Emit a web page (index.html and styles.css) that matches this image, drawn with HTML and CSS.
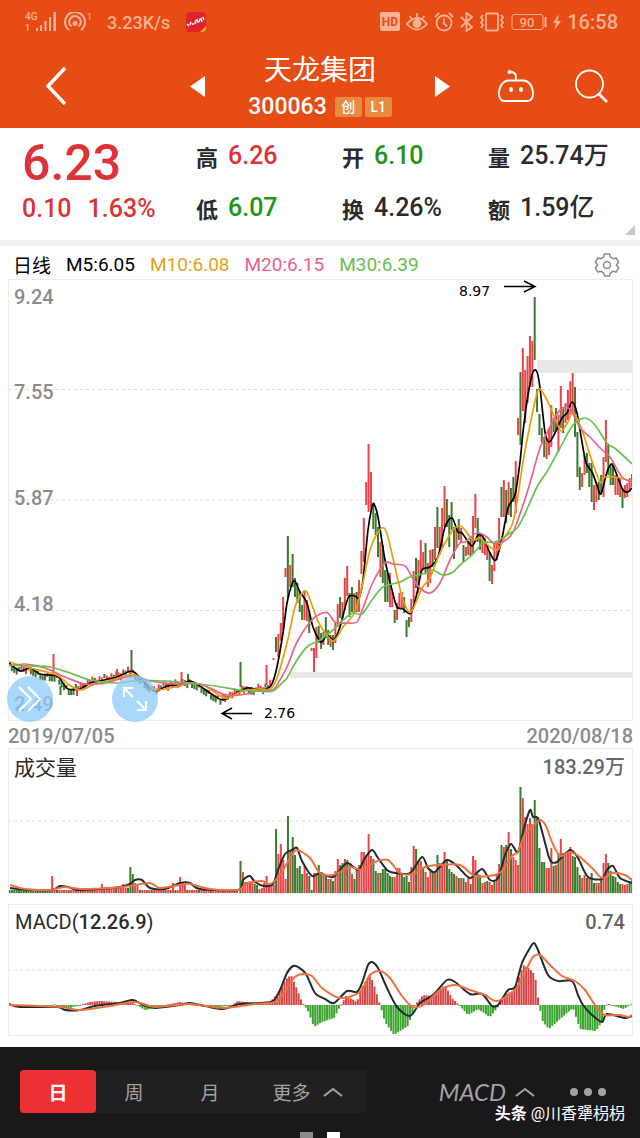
FILE: index.html
```html
<!DOCTYPE html>
<html lang="zh-CN">
<head>
	<meta charset="utf-8">
	<meta name="viewport" content="width=device-width, initial-scale=1">
	<title>天龙集团 300063</title>
	<link rel="stylesheet" href="styles.css">
</head>
<body>
<header class="header">
	<div class="status">
		<svg class="signal" width="32" height="20" viewBox="0 0 32 20" fill="currentColor">
			<text x="0" y="8" font-size="10" font-weight="500">4G</text>
			<text x="0" y="19" font-size="9" font-weight="500">1</text>
			<path d="M11 16h2v3h-2zM15 13h2v6h-2zM19.500 9h2v10h-2zM24 5h2v14h-2zM28.500 0h2.500v19h-2.500z"/>
		</svg>
		<svg class="hotspot" width="28" height="20" viewBox="0 0 28 20" fill="none" stroke="currentColor" stroke-width="2">
			<path d="M5 18a10 10 0 1 1 12 0M7.500 14.500a5.800 5.800 0 1 1 7 0"/>
			<circle cx="11" cy="11.500" r="2.500" fill="currentColor" stroke="none"/>
			<text x="23" y="8" font-size="9" fill="currentColor" stroke="none">1</text>
		</svg>
		<span class="speed">3.23K/s</span>
		<svg class="app" width="20" height="20" viewBox="0 0 20 20">
			<rect width="20" height="20" rx="4" fill="#e2222d"/>
			<path d="M20 14v2a4 4 0 0 1-4 4h-2z" fill="#f4b02c"/>
			<path d="M1 12l2 2M4 13l1-3M6 12l2 0M9 12l1-4M11 7l1 4M13 10l1-3M15 6l1 4M17 5l1 3" fill="none" stroke="#fff" stroke-width="1.500"/>
		</svg>
		<div class="status-right">
			<svg width="20" height="20" viewBox="0 0 20 20">
				<rect width="20" height="19" rx="2" fill="currentColor"/>
				<text x="10" y="14" font-size="12" font-weight="700" text-anchor="middle" fill="#e64c14">HD</text>
			</svg>
			<svg width="22" height="20" viewBox="0 0 22 20" fill="none" stroke="currentColor" stroke-width="1.800">
				<path d="M1 12q10-12 20 0q-10 11-20 0zM11 1v4M3.500 4l2.500 3M18.500 4l-2.500 3"/>
				<circle cx="11" cy="11.500" r="3.500" fill="currentColor"/>
			</svg>
			<svg width="20" height="20" viewBox="0 0 20 20" fill="none" stroke="currentColor" stroke-width="1.800">
				<circle cx="10" cy="11" r="7.500"/>
				<path d="M10 6.500v5l3 3M1 5l4-4M19 5l-4-4"/>
			</svg>
			<svg width="13" height="20" viewBox="0 0 13 20" fill="none" stroke="currentColor" stroke-width="1.800">
				<path d="M1 5l11 10-5.500 4V1L12 5 1 15"/>
			</svg>
			<svg width="26" height="20" viewBox="0 0 26 20" fill="none" stroke="currentColor" stroke-width="1.800">
				<rect x="7" y="1.500" width="12" height="17" rx="1"/>
				<path d="M4 3L2 5.500l2 2.500-2 2.500L4 13l-2 3M22 3l2 2.500L22 8l2 2.500-2 2.500 2 3" />
			</svg>
			<svg width="36" height="20" viewBox="0 0 36 20" fill="none" stroke="currentColor">
				<rect x="1" y="2.500" width="31" height="15" rx="2"/>
				<path d="M34.500 5v10" stroke-width="2"/>
				<text x="16" y="14.500" font-size="13" font-weight="500" text-anchor="middle" fill="currentColor" stroke="none">90</text>
			</svg>
			<svg class="bolt" width="8" height="20" viewBox="0 0 8 20" fill="currentColor">
				<path d="M6 2L0 11h3l-1.500 7L8 9H4.500z"/>
			</svg>
			<time class="clock">16:58</time>
		</div>
	</div>
	<nav class="nav">
		<div class="nav-left">
			<button type="button" aria-label="返回">
				<svg width="22" height="38" viewBox="0 0 22 38" fill="none" stroke="#fff" stroke-width="3.500"><path d="M20 1L3 19l17 18"/></svg>
			</button>
			<button type="button" aria-label="上一只">
				<svg width="15" height="21" viewBox="0 0 15 21" fill="#fff"><path d="M15 0v21L0 10.500z"/></svg>
			</button>
		</div>
		<div class="stock">
			<h1>天龙集团</h1>
			<p><span class="code">300063</span><span class="tag">创</span><span class="tag">L1</span></p>
		</div>
		<div class="nav-right">
			<button type="button" aria-label="下一只">
				<svg width="15" height="21" viewBox="0 0 15 21" fill="#fff"><path d="M0 0v21l15-10.500z"/></svg>
			</button>
			<button type="button" class="robot" aria-label="助手">
				<svg width="36" height="34" viewBox="0 0 36 34" fill="none" stroke="#fff" stroke-width="1.800">
					<path d="M11 11.500h14c6 0 10 6 10 13 0 5-2 7.500-6 7.500H7c-4 0-6-2.500-6-7.500 0-7 4-13 10-13zM18 11V8q0-5-6-5"/>
					<circle cx="11.500" cy="3" r="2" fill="#fff" stroke="none"/>
					<ellipse cx="13" cy="20.500" rx="2" ry="2.500" fill="#fff" stroke="none"/>
					<ellipse cx="23" cy="20.500" rx="2" ry="2.500" fill="#fff" stroke="none"/>
				</svg>
			</button>
			<button type="button" aria-label="搜索">
				<svg width="33" height="34" viewBox="0 0 33 34" fill="none" stroke="#fff" stroke-width="1.800">
					<circle cx="14.500" cy="15" r="13.500"/><path d="M24 25l8 8" stroke-width="2.500"/>
				</svg>
			</button>
		</div>
	</nav>
</header>

<section class="quote">
	<div class="price">
		<strong>6.23</strong>
		<span>0.10</span><span>1.63%</span>
	</div>
	<dl>
		<div><dt>高</dt><dd class="up">6.26</dd></div>
		<div><dt>开</dt><dd class="down">6.10</dd></div>
		<div><dt>量</dt><dd>25.74万</dd></div>
		<div><dt>低</dt><dd class="down">6.07</dd></div>
		<div><dt>换</dt><dd>4.26%</dd></div>
		<div><dt>额</dt><dd>1.59亿</dd></div>
	</dl>
	<i class="corner"></i>
</section>

<main>
	<div class="legend">
		<span class="name">日线</span>
		<span>M5:6.05</span>
		<span class="m10">M10:6.08</span>
		<span class="m20">M20:6.15</span>
		<span class="m30">M30:6.39</span>
		<button type="button" class="gear" aria-label="设置">
			<svg width="26" height="26" viewBox="0 0 26 26" fill="none" stroke="#8b8b8b" stroke-width="1.500" stroke-linejoin="round">
				<path d="M10.500 2h5l1 3.200 2.500 1.500 3.200-.8 2.300 4.300-2.200 2.800 2.200 2.800-2.300 4.300-3.200-.8-2.500 1.500-1 3.200h-5l-1-3.200-2.500-1.500-3.200.8-2.300-4.300L3.700 13 1.500 10.200l2.300-4.300 3.200.8 2.500-1.500z"/>
				<circle cx="13" cy="13" r="3.500"/>
			</svg>
		</button>
	</div>
	<div class="chart">
		<svg id="kline" viewBox="8 279 625 442">
			<path class="grid" d="M8 389.500H633M8 500H633M8 610.500H633"/>
			<path class="gap" d="M537 360h96v13h-96zM290 672h343v6H290z"/>
			<g class="axis">
				<text x="14" y="304">9.24</text>
				<text x="14" y="399">7.55</text>
				<text x="14" y="505">5.87</text>
				<text x="14" y="611">4.18</text>
				<text x="14" y="711">2.49</text>
			</g>
			<g class="mark">
				<text x="459" y="296">8.97</text>
				<path d="M504 286.500h30M524 281l11 5.500-11 5.500"/>
				<text x="264" y="718">2.76</text>
				<path d="M252 713.500h-30M232 708l-10 5.500 10 5.500"/>
			</g>
		</svg>
		<button type="button" class="round forward" aria-label="快进">
			<svg width="26" height="28" viewBox="0 0 26 28" fill="none" stroke="#fff" stroke-width="2"><path d="M2 2l12 12L2 26M11 2l12 12-12 12"/></svg>
		</button>
		<button type="button" class="round expand" aria-label="放大">
			<svg width="26" height="26" viewBox="0 0 26 26" fill="none" stroke="#fff" stroke-width="2"><path d="M2 11V2h9M2 2l9 9M24 15v9h-9M24 24l-9-9"/></svg>
		</button>
	</div>
	<div class="dates"><time>2019/07/05</time><time>2020/08/18</time></div>
	<div class="chart">
		<svg id="volume" viewBox="8 748 625 146">
			<path class="grid" d="M8 821H633"/>
			<text class="title" x="14" y="775">成交量</text>
			<text class="value" x="625" y="774">183.29万</text>
		</svg>
	</div>
	<div class="chart macd">
		<svg id="macd" viewBox="8 904 625 132">
			<path class="grid" d="M8 970H633"/>
			<text class="title small" x="15" y="929">MACD(<tspan class="bold">12.26.9</tspan>)</text>
			<text class="value" x="625" y="929">0.74</text>
		</svg>
	</div>
</main>

<footer class="footer">
	<div class="tabs">
		<button type="button" class="on">日</button>
		<button type="button">周</button>
		<button type="button">月</button>
		<button type="button" class="more">更多
			<svg width="20" height="10" viewBox="0 0 20 10" fill="none" stroke="currentColor" stroke-width="2"><path d="M1 9l9-7 9 7"/></svg>
		</button>
	</div>
	<button type="button" class="index">MACD
		<svg width="20" height="10" viewBox="0 0 20 10" fill="none" stroke="currentColor" stroke-width="2"><path d="M1 9l9-7 9 7"/></svg>
	</button>
	<button type="button" class="dots" aria-label="更多功能">
		<svg width="36" height="8" viewBox="0 0 36 8" fill="currentColor"><circle cx="4" cy="4" r="4"/><circle cx="18" cy="4" r="4"/><circle cx="32" cy="4" r="4"/></svg>
	</button>
	<div class="pager"><i></i><i class="on"></i></div>
	<p class="watermark"><b>头条</b> @川香犟枴枴</p>
</footer>
<script src="chart.js"></script>
</body>
</html>
```
FILE: styles.css
```css
* {
	margin: 0;
	padding: 0;
	box-sizing: border-box;
}
body {
	background: #fff;
	color: #2b2b2b;
	font-family: Roboto, "Noto Sans CJK SC", sans-serif;
}
button {
	border: 0;
	background: none;
	color: inherit;
	font: inherit;
	cursor: pointer;
}
svg {
	display: block;
}

/* 顶部 */
.header {
	height: 128px;
	background: #e64c14;
	color: #fff;
}
.status {
	display: flex;
	align-items: center;
	height: 44px;
	padding: 0 22px 0 25px;
	color: #fbb195;
}
.hotspot {
	margin-left: 7px;
}
.speed {
	margin-left: 15px;
	font-size: 18px;
	font-weight: 500;
}
.app {
	margin-left: 16px;
}
.status-right {
	display: flex;
	align-items: center;
	gap: 6px;
	margin-left: auto;
}
.clock {
	font-size: 20px;
	font-weight: 500;
}
.nav {
	display: grid;
	grid-template-columns: 1fr 230px 1fr;
	height: 84px;
}
.nav-left,
.nav-right {
	display: flex;
	align-items: center;
}
.nav-left {
	justify-content: space-between;
	padding-left: 45px;
}
.nav-right {
	gap: 41px;
	padding-right: 32px;
}
.robot {
	margin-left: auto;
}
.stock {
	padding-top: 8px;
	text-align: center;
}
.stock h1 {
	font-size: 28px;
	font-weight: 400;
	line-height: 38px;
}
.stock p {
	display: flex;
	align-items: center;
	justify-content: center;
	line-height: 34px;
}
.code {
	margin-right: 8px;
	font-size: 23px;
	font-weight: 500;
}
.tag {
	width: 27px;
	height: 20px;
	border-radius: 2px;
	background: #e88a40;
	font-size: 14px;
	font-weight: 500;
	line-height: 20px;
}
.tag + .tag {
	margin-left: 3px;
}

/* 行情 */
.quote {
	position: relative;
	display: grid;
	grid-template-columns: 174px 1fr;
	height: 118px;
	padding: 0 6px 6px 22px;
	border-bottom: 6px solid #f2f2f2;
}
.price {
	padding-top: 8px;
	color: #db3338;
	font-size: 25px;
	font-weight: 500;
}
.price strong {
	display: block;
	font-size: 50px;
	font-weight: 500;
	line-height: 54px;
}
.price span {
	margin-right: 16px;
	line-height: 38px;
}
.quote dl {
	display: grid;
	grid-template-columns: 1fr 1fr 1fr;
	grid-auto-rows: 52px;
	padding-top: 2px;
}
.quote dl div {
	display: flex;
	align-items: center;
}
.quote dt {
	width: 32px;
	font-size: 22px;
	font-weight: 700;
}
.quote dd {
	font-size: 25px;
	font-weight: 500;
	line-height: 38px;
	white-space: nowrap;
}
.quote .up {
	color: #db3338;
}
.quote .down {
	color: #239412;
}
.corner {
	position: absolute;
	right: 5px;
	bottom: 5px;
	border: 5px solid #c8c8c8;
	border-top-color: transparent;
	border-left-color: transparent;
}

/* 图表 */
main {
	padding: 0 7px 11px 8px;
}
.legend {
	display: flex;
	align-items: center;
	gap: 15px;
	height: 33px;
	padding: 4px 13px 0 5px;
	color: #000;
	font-size: 19px;
}
.m10 {
	color: #dfa21c;
}
.m20 {
	color: #e3638a;
}
.m30 {
	color: #68bd50;
}
.gear {
	margin-left: auto;
}
.chart {
	position: relative;
	outline: 1px solid #ececec;
	outline-offset: -1px;
}
.chart > svg {
	width: 100%;
	height: auto;
}
.grid {
	fill: none;
	stroke: #dcdcdc;
	stroke-dasharray: 3 3;
}
.gap {
	fill: #e8e8e8;
}
.axis {
	fill: #8c8c8c;
	font-size: 20px;
	font-weight: 500;
}
.mark {
	font-family: "DejaVu Sans", sans-serif;
	font-size: 14px;
	fill: #000;
}
.mark path {
	fill: none;
	stroke: #000;
	stroke-width: 1.5px;
}
.title {
	fill: #2b2b2b;
	font-size: 21px;
}
.title.small {
	font-size: 20px;
}
.bold {
	font-weight: 500;
}
.value {
	fill: #666;
	font-size: 20px;
	font-weight: 500;
	text-anchor: end;
}
.line {
	fill: none;
	stroke-width: 2px;
	stroke-linejoin: round;
}
#kline .line {
	stroke-width: 1.7px;
}
.macd {
	margin-top: 10px;
}
.dates {
	display: flex;
	justify-content: space-between;
	height: 27px;
	color: #8c8c8c;
	font-size: 20px;
	font-weight: 500;
	line-height: 31px;
}
.round {
	position: absolute;
	bottom: -1px;
	display: flex;
	align-items: center;
	justify-content: center;
	width: 46px;
	height: 46px;
	border-radius: 50%;
	background: rgba(140, 201, 252, .75);
}
.forward {
	left: -1px;
}
.expand {
	left: 104px;
}

/* 底部 */
.footer {
	position: relative;
	display: flex;
	align-items: flex-start;
	height: 91px;
	padding: 23px 34px 0 20px;
	background: #1a181b;
	color: #a3a3a3;
}
.tabs {
	display: flex;
	border-radius: 4px;
	background: #211f22;
}
.tabs button {
	width: 76px;
	height: 43px;
	border-radius: 4px;
	font-size: 19px;
}
.tabs .on {
	background: #ed3034;
	color: #fff;
	font-weight: 700;
}
.footer .more,
.index {
	display: flex;
	align-items: center;
	justify-content: center;
	gap: 12px;
}
.tabs .more {
	width: 119px;
}
.index {
	gap: 9px;
	height: 43px;
	margin-left: auto;
	font-family: Lato, sans-serif;
	font-size: 24px;
	font-style: italic;
}
.dots {
	height: 43px;
	margin-left: 35px;
}
.pager {
	position: absolute;
	bottom: 0;
	left: 0;
	right: 0;
	display: flex;
	justify-content: center;
	gap: 14px;
}
.pager i {
	width: 13px;
	height: 6px;
	background: #8a8a8a;
}
.pager .on {
	background: #fff;
}
.watermark {
	position: absolute;
	right: 15px;
	bottom: 12px;
	color: #fff;
	font-size: 16px;
	line-height: 24px;
	white-space: nowrap;
}
```
FILE: chart.js
```js
var NS = 'http://www.w3.org/2000/svg';
var RED = '#ea4448';
var GREEN = '#3c7a2c';
var STEP = 2.37;

function add(id, name, attrs) {
	var el = document.createElementNS(NS, name);
	for (var key in attrs) {
		el.setAttribute(key, attrs[key]);
	}
	document.getElementById(id).appendChild(el);
}

function bar(id, x, y1, y2, color) {
	add(id, 'rect', {x: x - 1, y: y1, width: 2, height: Math.max(y2 - y1, 1), fill: color});
}

function parse(text) {
	return text.trim().split(/\s+/).map(function (p) {
		return p.split(',').map(Number);
	});
}

//两点之间线性取值
function valueAt(pts, x) {
	for (var i = 1; i < pts.length; i++) {
		if (x <= pts[i][0]) {
			var a = pts[i - 1], b = pts[i];
			return a[1] + (b[1] - a[1]) * (x - a[0]) / (b[0] - a[0]);
		}
	}
	return pts[pts.length - 1][1];
}

//平滑曲线
function line(id, pts, color) {
	var d = 'M' + pts[0];
	for (var i = 1; i < pts.length; i++) {
		var a = pts[i - 1], b = pts[i];
		var p = pts[i - 2] || a, n = pts[i + 1] || b;
		d += 'C' + [a[0] + (b[0] - p[0]) / 7, a[1] + (b[1] - p[1]) / 7,
			b[0] - (n[0] - a[0]) / 7, b[1] - (n[1] - a[1]) / 7, b[0], b[1]].join(' ');
	}
	add(id, 'path', {'class': 'line', d: d, stroke: color});
}

//均线
var m5 = parse('9,663 20,671 30,668 40,674 57,676 63,683 68,689 80,689 90,683 100,681 117,677 132,671 142,680 155,691 167,686 180,685 190,681 200,686 213,695 223,700 233,695 247,688 260,690 268,688 272,684 277,667 283,633 287,603 292,584 295,581 300,592 307,603 313,627 321,642 327,635 334,640 340,627 348,598 355,596 359,598 363,580 368,530 372,507 374,504 378,517 385,560 392,590 397,607 403,609 411,613 417,593 422,570 430,567 438,557 445,527 452,518 458,532 462,533 472,546 478,535 483,537 490,553 496,560 502,538 508,508 515,495 520,462 523,432 528,395 533,372 537,372 540,388 545,432 549,442 555,433 562,418 567,413 572,402 577,413 582,442 586,463 592,472 597,485 601,494 607,472 612,464 618,478 623,490 628,492 632,488');
var m10 = parse('9,662 30,668 57,675 68,684 80,690 95,684 115,679 133,674 145,681 155,690 175,687 190,683 205,686 225,698 240,692 258,689 270,689 277,678 287,643 295,607 302,593 307,592 313,608 320,625 333,641 343,627 355,612 363,582 370,550 378,532 384,528 388,537 395,567 403,600 411,612 422,588 430,578 440,553 453,530 460,526 465,530 473,540 480,538 490,547 498,550 503,540 512,525 517,502 523,462 530,425 537,393 540,389 547,400 555,418 561,431 568,422 573,412 582,430 590,455 600,482 605,477 620,478 632,482');
var m20 = parse('9,666 25,664 45,668 65,677 85,684 105,683 132,676 150,681 175,684 200,684 223,694 240,695 258,691 272,690 277,685 287,667 297,642 310,622 320,614 328,613 335,622 347,623 357,622 363,608 373,582 385,563 393,564 405,566 412,577 420,588 430,593 440,583 450,560 460,543 465,542 477,533 487,537 493,543 503,542 513,532 522,508 530,483 540,448 550,427 560,410 570,409 580,428 590,437 600,448 610,457 622,477 632,482');
var m30 = parse('9,665 30,666 50,667 70,673 90,680 115,683 135,681 165,681 190,683 215,686 240,690 260,691 273,691 283,682 287,678 297,660 308,646 320,640 333,630 343,620 353,613 362,614 372,600 383,587 400,582 410,577 427,573 433,570 443,575 453,572 460,565 472,555 483,543 495,542 507,535 518,527 528,507 537,487 548,470 560,448 573,425 585,418 595,425 607,443 617,450 632,464');

//前段窄幅整理
for (var i = 0; 9.5 + STEP * i < 271; i++) {
	var x = 9.5 + STEP * i;
	var y = valueAt(m5, x);
	var rise = valueAt(m5, x + 5) < y;
	var high = rise ? y - 6 + (i * 7) % 5 : y - 2 + (i * 7) % 4;
	bar('kline', x, high, high + 4 + (i * 5) % 4, (rise ? i % 4 != 0 : i % 4 == 0) ? RED : GREEN);
}
var spikes = [[53.5, 654, 676, 1], [131.5, 650, 670, 0], [240.5, 662, 687, 0], [60.500, 686, 695, 0], [77, 688, 696, 1],
	[117, 669, 678, 1], [181.5, 672, 685, 1], [188, 674, 683, 0], [266.5, 665, 685, 1], [273.5, 658, 660, 1]];
spikes.forEach(function (s) {
	bar('kline', s[0], s[1], s[2], s[3] ? RED : GREEN);
});

//从276开始逐根: 最高,最低,涨跌
var candles = parse('637,652,0 634,657,1 623,641,1 597,630,1 568,577,1 536,598,0 565,587,1 554,587,0 578,597,0 583,603,0 592,612,0 605,620,0 592,620,1 600,621,1 612,633,0 648,651,1 648,672,1 627,658,1 626,643,0 633,649,0 632,645,1 617,638,0 630,645,0 635,647,1 635,650,0 623,643,1 604,627,1 597,618,0 602,618,1 578,610,1 566,596,1 593,617,0 587,612,0 593,612,1 592,612,0 580,612,1 551,574,1 518,562,1 482,505,1 444,512,1 472,510,1 505,529,0 513,535,0 527,557,0 542,577,1 545,583,0 570,602,0 573,602,0 573,607,1 592,607,1 610,623,0 603,620,1 593,608,1 592,608,1 597,613,0 620,637,0 617,627,0 599,622,1 571,603,1 558,588,0 560,593,1 540,573,1 552,570,1 543,573,0 563,587,1 550,583,1 549,567,0 527,560,1 507,548,0 527,555,1 508,548,1 486,527,1 499,527,0 515,547,0 502,530,0 527,559,0 527,548,1 519,540,0 528,543,1 545,562,0 547,556,1 542,555,1 538,556,0 516,553,1 494,528,1 518,542,0 533,550,0 535,553,1 538,555,1 545,560,1 552,581,0 565,584,1 542,571,1 542,560,1 518,552,1 487,517,0 480,517,1 490,523,0 482,515,1 488,517,0 477,502,0 461,513,1 418,435,1 372,445,0 348,411,1 370,423,1 356,403,1 336,387,1 341,387,1 297,360,0 389,412,0 414,435,0 428,442,0 437,457,0 438,459,1 428,455,1 405,447,1 418,432,0 408,430,0 415,452,1 386,428,1 407,433,0 403,423,1 390,420,1 381,415,1 373,412,1 387,437,0 432,477,0 467,490,0 473,487,1 455,475,1 453,473,0 463,487,0 463,502,0 485,510,1 482,502,1 482,500,0 475,493,0 457,497,1 420,462,1 445,475,0 465,485,0 465,485,0 475,495,1 477,495,1 478,497,1 488,508,0 485,498,1 483,497,1 478,492,1 474,487,1');
var gapX = (632 - 276) / (candles.length - 1);
candles.forEach(function (c, i) {
	bar('kline', 276 + gapX * i, c[0], c[1], c[2] ? RED : GREEN);
});
line('kline', m5, '#000');
line('kline', m10, '#e5a00c');
line('kline', m20, '#e8648a');
line('kline', m30, '#6cc04f');

//成交量
var quiet = {18: 17, 39: 9, 48: 9, 51: 26, 52: 19, 53: 10, 54: 7, 69: 10, 72: 16, 73: 10, 74: 9};
for (i = 0; i < 97; i++) {
	var h = quiet[i] || 3 + (i * 3) % 3 + (i > 38 && i < 55 ? 2 : 0);
	bar('volume', 9.5 + STEP * i, 893 - h, 893, i < 18 || i == 51 || i == 52 || i % 5 == 0 ? GREEN : RED);
}
var volumes = parse('32,0 21,1 11,1 11,1 11,1 11,1 9,0 8,0 4,1 5,1 10,1 17,1 8,1 8,1 8,1 64,0 39,1 49,1 33,1 14,1 77,0 43,1 56,0 38,0 25,0 27,0 19,0 27,1 20,1 17,0 3,0 20,1 20,1 28,0 21,0 19,1 18,0 14,1 14,0 12,0 22,1 34,1 28,0 30,0 34,1 33,0 28,1 19,1 14,0 25,0 28,1 41,1 41,1 38,1 59,1 37,1 34,0 22,0 20,1 20,0 24,0 24,0 20,0 17,0 16,0 16,1 25,1 25,1 19,0 16,0 17,0 11,0 26,1 47,1 44,0 31,1 32,1 24,0 21,1 16,1 24,1 22,0 20,1 38,0 30,1 29,1 41,1 34,0 24,0 21,0 19,0 17,1 15,0 15,1 15,0 11,1 15,1 9,0 37,1 33,1 19,0 18,0 10,1 11,1 12,0 11,1 8,1 13,0 18,1 29,1 48,0 46,1 48,0 61,1 44,0 36,1 33,1 28,1 106,0 95,1 76,1 69,1 75,1 69,1 93,0 76,0 45,0 31,0 31,0 25,1 25,1 45,1 27,0 28,1 40,0 54,1 40,0 40,1 42,1 46,1 37,0 36,0 26,0 18,0 15,1 18,1 15,0 15,1 20,0 10,0 10,1 10,1 15,0 30,1 39,1 30,0 22,0 17,0 16,0 11,0 9,0 9,1 8,1 9,1 10,0 15,1');
gapX = (632 - 240.5) / (volumes.length - 1);
volumes.forEach(function (v, i) {
	bar('volume', 240.5 + gapX * i, 893 - v[0], 893, v[1] ? RED : GREEN);
});
line('volume', parse('10,888 30,890 52,890 60,886 68,887 78,890 100,889 120,887 130,884 135,880 142,880 150,888 165,889 180,883 190,883 200,889 238,890 243,880 250,876 255,882 264,886 273,884 278,870 285,854 292,850 297,848 302,861 312,876 320,873 333,877 347,863 358,870 365,858 372,850 378,858 387,870 395,873 410,873 422,857 428,868 435,872 447,860 458,867 470,878 482,869 490,880 498,878 505,855 511,844 518,852 524,828 530,810 533,817 538,818 543,835 550,860 557,862 570,850 578,858 588,877 602,879 607,870 613,866 620,878 632,883'), '#222b30');
line('volume', parse('10,885 25,889 50,890 65,887 80,889 110,888 130,886 150,883 160,888 180,885 190,884 210,889 238,890 247,883 262,881 270,884 280,875 290,858 297,850 310,858 320,873 333,875 350,867 362,870 375,862 388,860 400,873 412,874 425,867 440,865 460,865 475,876 495,875 503,870 512,856 518,852 523,838 530,829 540,820 546,826 552,842 560,856 570,852 580,857 592,868 602,878 612,873 625,875 632,880'), '#ef7040');

//MACD
var hist = parse('9,0 30,1 52,1 54,-1 60,3 70,3 80,0 90,-3 100,-4 115,-3 133,-2 138,1 145,5 155,3 165,0 180,-3 190,-1 205,2 220,2 232,0 238,-4 250,-2 270,-3 280,-14 286,-26 291,-30 297,-16 302,-3 304,0 308,6 314,22 322,17 334,13 341,0 346,-9 352,-6 357,-3 362,-18 370,-31 375,-17 380,0 385,17 394,30 408,21 415,0 423,-10 432,-9 445,-20 452,-7 459,0 468,10 478,4 490,12 498,2 500,-4 508,-12 515,-15 523,-40 530,-36 535,-30 539,0 543,17 549,24 560,14 573,3 580,24 596,26 603,15 605,0 609,-1 617,2 624,4 630,0 632,-3');
for (x = 9.5; x < 633; x += STEP) {
	var v = valueAt(hist, x);
	bar('macd', x, Math.min(1005, 1005 + v), Math.max(1005, 1005 + v), v < 0 ? '#d64545' : '#3aa52d');
}
line('macd', parse('9,1004 20,1007 57,1007 65,1010 80,1010 95,1006 120,1003 133,1000 143,1005 155,1008 180,1005 190,1003 205,1006 223,1009 240,1004 260,1003 273,1001 280,990 287,973 293,966 298,967 306,974 315,993 325,999 334,1003 347,991 357,992 362,983 368,965 372,962 378,968 387,988 397,1007 410,1016 420,1003 433,995 447,980 455,982 470,994 482,994 492,1006 498,1005 508,990 515,987 522,963 530,948 534,943 538,950 548,975 558,981 572,981 578,995 583,1005 592,1015 602,1022 607,1014 625,1018 632,1016'), '#222b30');
line('macd', parse('9,1005 60,1007 80,1010 110,1006 135,1002 155,1007 190,1004 223,1008 255,1004 275,1002 285,991 295,977 303,974 312,976 322,988 340,998 360,992 370,975 380,971 390,978 402,996 413,1007 425,1004 440,990 455,985 470,990 485,995 497,1001 515,990 525,972 533,957 540,955 550,965 562,976 575,981 585,990 597,1008 605,1015 620,1015 628,1017 632,1015'), '#ef7040');
```
